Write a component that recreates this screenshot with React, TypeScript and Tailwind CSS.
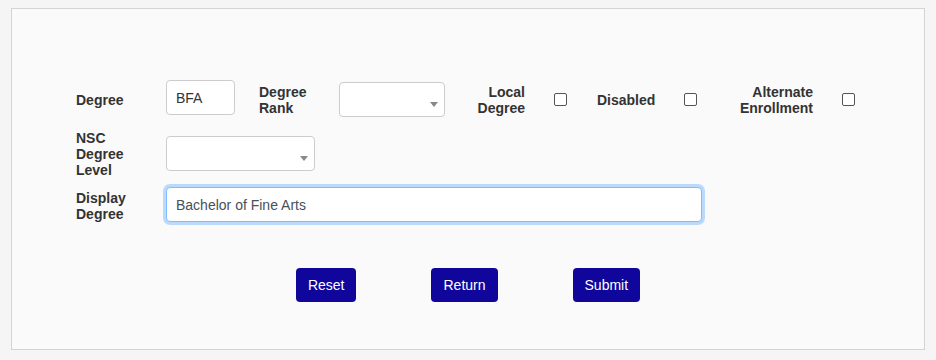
import React from "react";

function SelectBox({ width }: { width: string }) {
  return (
    <div className={`relative h-[35px] ${width} rounded-[4px] border border-[#cccccc] bg-white`}>
      <span className="absolute right-[6px] top-[19px] h-0 w-0 border-x-[4px] border-t-[5px] border-x-transparent border-t-[#888888]" />
    </div>
  );
}

function Check() {
  return <div className="h-[13px] w-[13px] rounded-[2px] border border-[#555555] bg-white" />;
}

function Btn({ label }: { label: string }) {
  return (
    <button className="h-[34px] rounded-[4px] bg-[#10069c] px-3 text-[14px] text-white">
      {label}
    </button>
  );
}

export default function App() {
  return (
    <div className="h-[360px] w-[936px] bg-[#f5f5f5] pl-[11px] pt-[8px] font-['Liberation_Sans',Arial,sans-serif] text-[14px] leading-[16px] text-[#333333]">
      <div className="h-[342px] w-[914px] border border-[#d4d4d4] bg-[#fafafa] pl-[64px] pt-[71px]">
        {/* row 1 */}
        <div className="flex h-[37px] items-center">
          <div className="mt-[2px] w-[90px] font-bold">Degree</div>
          <div className="flex h-[35px] w-[69px] items-center self-start rounded-[4px] border border-[#cccccc] bg-white pl-[9px]">
            BFA
          </div>
          <div className="ml-[24px] mt-[2px] w-[80px] font-bold">
            Degree
            <br />
            Rank
          </div>
          <div className="self-end">
            <SelectBox width="w-[106px]" />
          </div>
          <div className="mt-[2px] w-[80px] text-right font-bold">
            Local
            <br />
            Degree
          </div>
          <div className="ml-[29px] mt-[2px]">
            <Check />
          </div>
          <div className="ml-[30px] mt-[2px] w-[87px] font-bold">Disabled</div>
          <div className="mt-[2px]">
            <Check />
          </div>
          <div className="mt-[2px] w-[116px] text-right font-bold">
            Alternate
            <br />
            Enrollment
          </div>
          <div className="ml-[29px] mt-[2px]">
            <Check />
          </div>
        </div>

        {/* row 2 */}
        <div className="mt-[12px] flex h-[48px] items-center">
          <div className="mt-[2px] w-[90px] font-bold">
            NSC
            <br />
            Degree
            <br />
            Level
          </div>
          <SelectBox width="w-[149px]" />
        </div>

        {/* row 3 */}
        <div className="mt-[10px] flex h-[35px] items-center">
          <div className="mt-[2px] w-[90px] font-bold">
            Display
            <br />
            Degree
          </div>
          <div className="flex h-[35px] w-[536px] items-center rounded-[4px] border border-[#80bdff] bg-white pl-[9px] text-[#495057] shadow-[0_0_0_3px_rgba(0,123,255,0.25)]">
            Bachelor of Fine Arts
          </div>
        </div>

        {/* buttons */}
        <div className="-ml-[64px] mt-[46px] flex justify-center gap-[75px]">
          <Btn label="Reset" />
          <Btn label="Return" />
          <Btn label="Submit" />
        </div>
      </div>
    </div>
  );
}
